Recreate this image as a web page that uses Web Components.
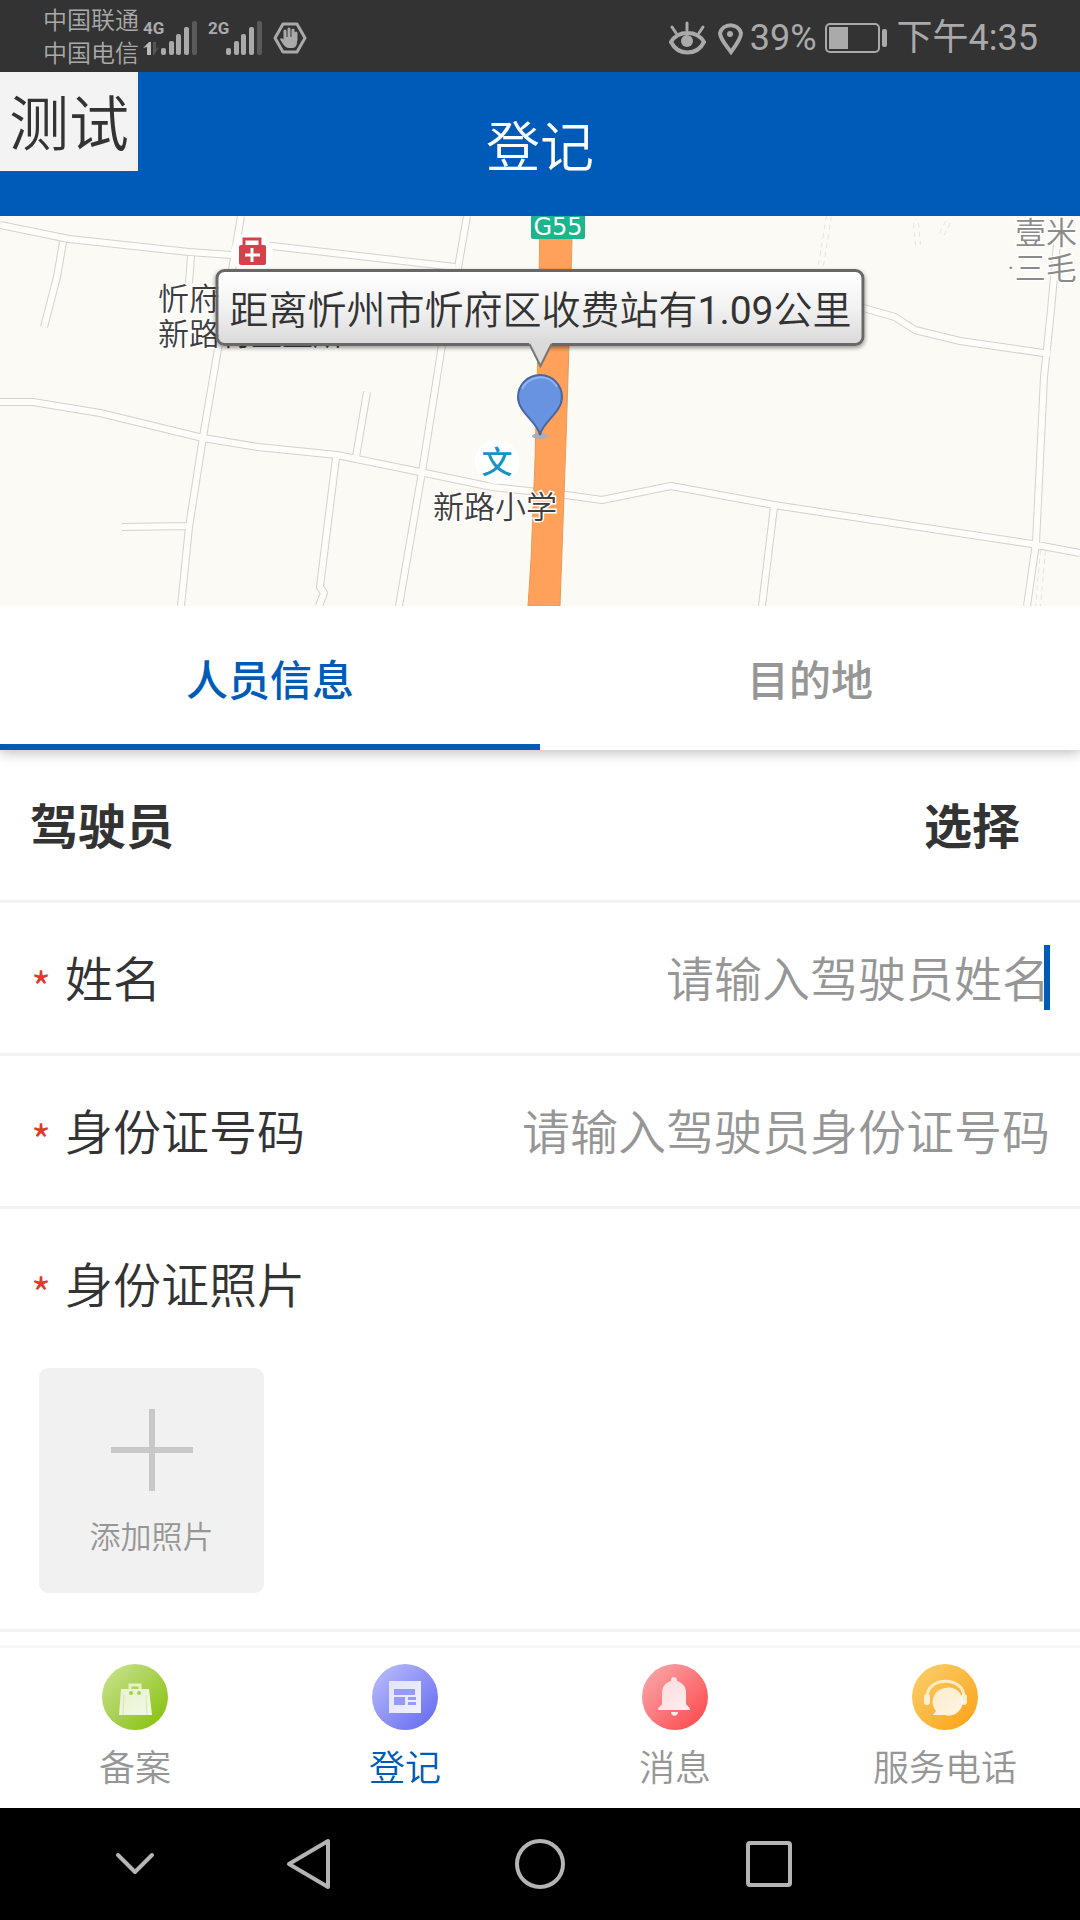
<!DOCTYPE html>
<html lang="zh-CN">
<head>
<meta charset="utf-8">
<meta name="viewport" content="width=device-width, initial-scale=1">
<title>登记</title>
<style>
  body {
    margin: 0;
    min-height: 100vh;
    display: flex;
    flex-direction: column;
    background: #fff;
    color: #333;
    font-family: "Noto Sans CJK SC", sans-serif;
    font-weight: 350;
    --brand: #005bb8;
    --muted: #969696;
    --line: #f3f3f3;
  }
  main {
    flex: 1;
  }
</style>
</head>
<body>
<status-bar></status-bar>
<app-header badge="测试">登记</app-header>
<map-view>距离忻州市忻府区收费站有<b>1.09</b>公里</map-view>
<tab-strip>
  <tab-button selected>人员信息</tab-button>
  <tab-button>目的地</tab-button>
</tab-strip>
<main>
  <section-title action="选择">驾驶员</section-title>
  <text-field label="姓名" placeholder="请输入驾驶员姓名" active></text-field>
  <text-field label="身份证号码" placeholder="请输入驾驶员身份证号码"></text-field>
  <photo-field label="身份证照片">添加照片</photo-field>
</main>
<bottom-nav>
  <nav-item icon="bag">备案</nav-item>
  <nav-item icon="form" current>登记</nav-item>
  <nav-item icon="bell">消息</nav-item>
  <nav-item icon="headset">服务电话</nav-item>
</bottom-nav>
<system-nav></system-nav>

<script>
class BaseElement extends HTMLElement {
  constructor() {
    super();
    this.attachShadow({ mode: 'open' });
  }

  connectedCallback() {
    this.shadowRoot.innerHTML = this.render();
  }
}

class StatusBar extends BaseElement {
  signal() {
    return `
      <g fill="#aaa">
        <rect x="18" y="28" width="5" height="7" rx="2"/>
        <rect x="26" y="21" width="5" height="14" rx="2"/>
        <rect x="33" y="14" width="5" height="21" rx="2"/>
        <rect x="41" y="7" width="5" height="28" rx="2"/>
      </g>
      <rect x="49" y="1" width="5" height="34" rx="2" fill="#5a5a5a"/>
    `;
  }

  render() {
    return `
      <style>
      :host {
        display: flex;
        align-items: center;
        box-sizing: border-box;
        min-height: 72px;
        padding: 3px 42px 0 43px;
        background: #333;
        color: #aaa;
        font-family: Roboto, "Noto Sans CJK SC", sans-serif;
        font-size: 36px;
        font-weight: 400;
        line-height: 48px;
      }
      svg {
        display: block;
        flex: none;
      }
      .carriers {
        margin-right: 4px;
        font-size: 24px;
        font-weight: 350;
        line-height: 33px;
      }
      .signal {
        display: grid;
        margin-right: 9px;
      }
      .signal > * {
        grid-area: 1 / 1;
      }
      .type {
        font-size: 17px;
        font-weight: 700;
        line-height: 17px;
      }
      .hand {
        margin-right: auto;
      }
      .eye {
        margin-right: 11px;
      }
      .pin {
        margin-right: 6px;
      }
      .battery {
        margin: 0 10px 0 8px;
      }
      </style>
      <div class="carriers"><div>中国联通</div><div>中国电信</div></div>
      <div class="signal">
        <span class="type">4G</span>
        <svg width="56" height="36" viewBox="0 0 56 36">
          <path d="M0 28l6-6h2v13H4v-8z" fill="#bbb"/>
          <path d="M10 22h3v7l3-2-5 8h-1z" fill="#555"/>
          ${this.signal()}
        </svg>
      </div>
      <div class="signal">
        <span class="type">2G</span>
        <svg width="56" height="36" viewBox="0 0 56 36">${this.signal()}</svg>
      </div>
      <svg class="hand" width="34" height="32" viewBox="0 0 34 32">
        <path d="M10 2h14l8 14-8 14H10L2 16z" fill="none" stroke="#aaa" stroke-width="3" stroke-linejoin="round"/>
        <path d="M12 18V9m4 8V7m4 10V8m3 10v-7" stroke="#aaa" stroke-width="3" stroke-linecap="round"/>
        <path d="M11 15h13v5c0 4-2 6-5 6h-3c-4 0-7-5-9-9 2-2 4 1 5 3z" fill="#aaa"/>
      </svg>
      <svg class="eye" width="37" height="34" viewBox="0 0 37 34">
        <path d="M2 21C9 9 28 9 35 21 28 35 9 35 2 21z" fill="none" stroke="#aaa" stroke-width="4"/>
        <circle cx="18" cy="20" r="6" fill="#aaa"/>
        <path d="M18 9V2M7 12L3 6m27 6l4-6" stroke="#aaa" stroke-width="3" stroke-linecap="round"/>
      </svg>
      <svg class="pin" width="27" height="35" viewBox="0 0 27 35">
        <path d="M14 32C9 25 3 19 3 13a11 11 0 0 1 21 0c0 6-5 12-10 19z" fill="none" stroke="#aaa" stroke-width="4"/>
        <circle cx="13" cy="14" r="3" fill="#aaa"/>
      </svg>
      <span>39%</span>
      <svg class="battery" width="62" height="30" viewBox="0 0 62 30">
        <rect x="1" y="1" width="53" height="28" rx="4" fill="none" stroke="#aaa" stroke-width="2"/>
        <rect x="4" y="4" width="19" height="22" fill="#aaa"/>
        <rect x="57" y="6" width="5" height="18" rx="2" fill="#aaa"/>
      </svg>
      <span>下午4:35</span>
    `;
  }
}

class AppHeader extends BaseElement {
  render() {
    return `
      <style>
      :host {
        display: block;
        position: relative;
        padding: 36px 0;
        background: var(--brand);
        color: #fff;
        text-align: center;
      }
      h1 {
        margin: 0;
        font-size: 54px;
        font-weight: inherit;
        line-height: 72px;
      }
      .badge {
        position: absolute;
        top: 0;
        left: 0;
        padding: 6px 9px 9px;
        background: #f3f3f3;
        color: #333;
        font-size: 60px;
        line-height: 84px;
      }
      </style>
      <h1><slot></slot></h1>
      <div class="badge">${this.getAttribute('badge')}</div>
    `;
  }
}

class MapView extends BaseElement {
  render() {
    const roads = [
      'M0 225L69 239L189 252L232 255',
      'M252 243L272 246L455 267',
      'M63 242L57 277L44 327',
      'M191 256L189 283',
      'M241 216L232 270L219 343L203 437L189 527L181 606',
      'M0 402H33L100 413L203 438L258 447L337 455L420 472L492 487L566 495L602 500L671 486L774 505L1032 544L1080 553',
      'M367 392L356 457',
      'M336 458L327 530L320 587L324 593L319 606',
      'M467 216L458 268L442 345L422 472L399 606',
      'M122 527L188 526',
      'M860 307L895 317L915 330L960 341L1050 354',
      'M1057 243L1051 310L1044 377L1036 543L1027 606',
      'M774 507L762 606',
    ].join('');

    return `
      <style>
      :host {
        display: block;
        position: relative;
        height: 390px;
        overflow: hidden;
        background: #fcfaf4;
        font-family: Roboto, "Noto Sans CJK SC", sans-serif;
      }
      svg {
        display: block;
        width: 100%;
        height: 100%;
      }
      .label {
        font-size: 31px;
        fill: #3e3e3e;
        stroke: #fff;
        stroke-width: 3px;
        paint-order: stroke;
      }
      .faint {
        fill: #8a8a8a;
      }
      .callout {
        position: absolute;
        top: 53px;
        left: 50%;
        transform: translateX(-50%);
        padding: 14px 10px 6px 11px;
        border: 3px solid #686868;
        border-radius: 9px;
        background: linear-gradient(#fff, #f2f2f2 50%, #dadada);
        box-shadow: 0 2px 4px rgba(0, 0, 0, 0.4);
        color: #333;
        font-size: 39px;
        line-height: 51px;
        white-space: nowrap;
      }
      ::slotted(b) {
        font-weight: 400;
      }
      .tail {
        position: absolute;
        top: 100%;
        left: 50%;
        width: 24px;
        height: 26px;
        transform: translateX(-50%);
        overflow: visible;
      }
      </style>
      <svg viewBox="0 216 1080 390" preserveAspectRatio="xMidYMid slice">
        <g fill="none" stroke-linejoin="round">
          <path d="M829 216L821 265M916 223L918 245M948 222L942 234M1043 550L1038 606" stroke="#e6e4df" stroke-width="6" stroke-dasharray="5 4"/>
          <path d="M829 216L821 265M916 223L918 245M948 222L942 234M1043 550L1038 606" stroke="#fcfaf4" stroke-width="4"/>
          <path d="${roads}" stroke="#d4d2ce" stroke-width="8"/>
          <path d="${roads}" stroke="#fefdfa" stroke-width="6"/>
        </g>
        <path d="M540 216H572V240L569 345L566 440L560 606H528L531 560L535 460L538 345L540 216z" fill="#ffa15a" stroke="#e79a58"/>
        <rect x="531" y="210" width="54" height="29" rx="2" fill="#1bb68e"/>
        <text x="558" y="235" text-anchor="middle" font-family="DejaVu Sans, sans-serif" font-size="24" font-weight="400" fill="#fff">G55</text>
        <circle cx="252" cy="253" r="21" fill="#fff"/>
        <path d="M244 246v-7h16v7" fill="none" stroke="#d3414a" stroke-width="3"/>
        <rect x="239" y="245" width="27" height="20" rx="2" fill="#d3414a"/>
        <path d="M252 248v14m-7-7h15" stroke="#fff" stroke-width="3"/>
        <text class="label" x="158" y="310">忻府</text>
        <text class="label" x="158" y="345">新路村卫生所</text>
        <text class="label faint" x="1015" y="244">壹米</text>
        <text class="label faint" x="1007" y="279">·三毛</text>
        <circle cx="497" cy="462" r="22" fill="#fff"/>
        <text x="497" y="473" text-anchor="middle" font-size="31" font-weight="500" fill="#1793c4">文</text>
        <text class="label" x="433" y="518">新路小学</text>
        <ellipse cx="540" cy="436" rx="8" ry="3" fill="#a8aebb"/>
        <path d="M540 435c-2-13-22-22-22-38a22 22 0 0 1 44 0c0 16-20 25-22 38z" fill="#6893e0" stroke="#48669f" stroke-width="2"/>
        <path d="M522 389c5-13 27-17 35-2" fill="none" stroke="#8fb4f3" stroke-width="2"/>
      </svg>
      <div class="callout">
        <slot></slot>
        <svg class="tail" viewBox="0 0 24 26">
          <path d="M0-1L12 23L24-1z" fill="#dadada"/>
          <path d="M1 1L12 23L23 1" fill="none" stroke="#777" stroke-width="2"/>
        </svg>
      </div>
    `;
  }
}

class TabStrip extends BaseElement {
  render() {
    return `
      <style>
      :host {
        display: flex;
        position: relative;
        background: #fff;
        box-shadow: 0 3px 12px rgba(0, 0, 0, 0.25);
        clip-path: inset(0 0 -24px);
      }
      </style>
      <slot></slot>
    `;
  }
}

class TabButton extends BaseElement {
  render() {
    return `
      <style>
      :host {
        display: flex;
        flex: 1;
      }
      button {
        flex: 1;
        padding: 42px 0;
        border: 0;
        background: none;
        color: var(--muted);
        font: 500 42px/60px "Noto Sans CJK SC", sans-serif;
      }
      :host([selected]) button {
        color: var(--brand);
        box-shadow: inset 0 -6px var(--brand);
      }
      </style>
      <button type="button"><slot></slot></button>
    `;
  }
}

class SectionTitle extends BaseElement {
  render() {
    return `
      <style>
      :host {
        display: flex;
        justify-content: space-between;
        padding: 40px 60px 44px 30px;
        border-bottom: 3px solid var(--line);
      }
      h2, button {
        margin: 0;
        padding: 0;
        border: 0;
        background: none;
        color: inherit;
        font: 700 48px/66px "Noto Sans CJK SC", sans-serif;
      }
      </style>
      <h2><slot></slot></h2>
      <button type="button">${this.getAttribute('action')}</button>
    `;
  }
}

const fieldLabelStyle = `
  label, .label {
    display: flex;
    align-items: center;
    flex: none;
    font-size: 48px;
    line-height: 66px;
  }
  .required {
    width: 22px;
    margin-right: 13px;
    padding-top: 20px;
    color: #e2382c;
    font-size: 42px;
    font-weight: 400;
    line-height: 36px;
    text-align: center;
  }
`;

class TextField extends BaseElement {
  render() {
    return `
      <style>
      :host {
        display: flex;
        align-items: center;
        padding: 40px 30px 44px;
        border-bottom: 3px solid var(--line);
      }
      ${fieldLabelStyle}
      .control {
        flex: 1;
        position: relative;
        min-width: 0;
      }
      input {
        display: block;
        box-sizing: border-box;
        width: 100%;
        height: 66px;
        padding: 0;
        border: 0;
        outline: 0;
        background: none;
        color: inherit;
        font: inherit;
        font-size: 48px;
        line-height: 66px;
        text-align: right;
      }
      input::placeholder {
        color: var(--muted);
        opacity: 1;
      }
      .caret {
        display: none;
        position: absolute;
        inset: 2px 0 -1px auto;
        width: 6px;
        background: var(--brand);
      }
      :host([active]) .caret {
        display: block;
      }
      </style>
      <label for="input"><span class="required">*</span>${this.getAttribute('label')}</label>
      <div class="control">
        <input id="input" type="text" placeholder="${this.getAttribute('placeholder')}">
        <span class="caret"></span>
      </div>
    `;
  }
}

class PhotoField extends BaseElement {
  render() {
    return `
      <style>
      :host {
        display: block;
        padding: 40px 30px 36px;
        border-bottom: 3px solid var(--line);
      }
      ${fieldLabelStyle}
      button {
        display: flex;
        flex-direction: column;
        align-items: center;
        justify-content: center;
        gap: 20px;
        width: 225px;
        height: 225px;
        margin: 53px 9px 0;
        padding: 6px 0 0;
        border: 0;
        border-radius: 9px;
        background: #f1f1f1;
        color: var(--muted);
        font: inherit;
        font-size: 31px;
        line-height: 48px;
      }
      </style>
      <div class="label" id="label"><span class="required">*</span>${this.getAttribute('label')}</div>
      <button type="button" aria-describedby="label">
        <svg width="82" height="82" viewBox="0 0 82 82">
          <path d="M41 0v82M0 41h82" stroke="#c8c8c8" stroke-width="6"/>
        </svg>
        <slot></slot>
      </button>
    `;
  }
}

class BottomNav extends BaseElement {
  render() {
    return `
      <style>
      :host {
        display: flex;
        border-top: 3px solid #f7f7f7;
        background: #fff;
      }
      </style>
      <slot></slot>
    `;
  }
}

const navIcons = {
  bag: {
    colors: ['#c5e089', '#8ac211'],
    shape: `
      <path d="M19 25h28l3 26H17z" fill="url(#shine)"/>
      <path d="M28 25v-4h10v4" fill="none" stroke="#e4f2c6" stroke-width="3"/>
      <circle cx="29" cy="29" r="2" fill="#a5cf4c"/>
      <circle cx="37" cy="29" r="2" fill="#a5cf4c"/>
      <path d="M22 31l-1 20m23-20l1 20" stroke="#d4e9a6"/>
    `,
  },
  form: {
    colors: ['#b5b7fa', '#6870f2'],
    shape: `
      <rect x="17" y="17" width="32" height="32" fill="url(#shine)"/>
      <path d="M22 25h21v6H22zM22 33h11v8H22zM36 33h8v3h-8zM36 38h8v3h-8z" fill="#959af6"/>
    `,
  },
  bell: {
    colors: ['#f9a3a5', '#fd4d51'],
    shape: `
      <path d="M32 13c2 0 3 1 3 4 6 2 9 6 9 12v11c1 2 4 3 4 6H16c0-3 3-4 4-6V29c0-6 3-10 9-12 0-3 1-4 3-4z" fill="url(#shine)"/>
      <path d="M29 48h7c0 5-7 5-7 0z" fill="#fff0f0"/>
    `,
  },
  headset: {
    colors: ['#f9cc66', '#fda51b'],
    shape: `
      <path d="M15 33C15 12 52 12 52 33" fill="none" stroke="#fdebc5" stroke-width="3"/>
      <rect x="12" y="30" width="6" height="11" rx="3" fill="#fdf0d5"/>
      <rect x="49" y="30" width="6" height="11" rx="3" fill="#fdf0d5"/>
      <path d="M33 24a14 14 0 1 1 0 27H21l3-4A14 14 0 0 1 33 24z" fill="url(#shine)"/>
    `,
  },
};

class NavItem extends BaseElement {
  render() {
    const { colors, shape } = navIcons[this.getAttribute('icon')];

    return `
      <style>
      :host {
        display: block;
        flex: 1;
      }
      a {
        display: flex;
        flex-direction: column;
        align-items: center;
        gap: 11px;
        padding: 16px 0 19px;
        color: var(--muted);
        font-size: 36px;
        line-height: 48px;
        text-decoration: none;
      }
      :host([current]) a {
        color: var(--brand);
      }
      </style>
      <a href="#${this.getAttribute('icon')}">
        <svg width="66" height="66" viewBox="0 0 66 66">
          <defs>
            <linearGradient id="disc" x1="0" y1="0" x2="1" y2="1">
              <stop offset="0.1" stop-color="${colors[0]}"/>
              <stop offset="0.9" stop-color="${colors[1]}"/>
            </linearGradient>
            <linearGradient id="shine" x1="0" y1="0" x2="1" y2="1">
              <stop offset="0" stop-color="#fff" stop-opacity="0.7"/>
              <stop offset="1" stop-color="#fff" stop-opacity="0.9"/>
            </linearGradient>
          </defs>
          <circle cx="33" cy="33" r="33" fill="url(#disc)"/>
          ${shape}
        </svg>
        <slot></slot>
      </a>
    `;
  }
}

class SystemNav extends BaseElement {
  render() {
    return `
      <style>
      :host {
        display: grid;
        grid-template-columns: 75fr 120fr 230fr 230fr 230fr 195fr;
        background: #000;
      }
      button {
        display: grid;
        place-items: center;
        padding: 28px 0;
        border: 0;
        background: none;
      }
      button:first-of-type {
        grid-column: 2;
      }
      svg {
        fill: none;
        stroke: #b4b4b4;
        stroke-width: 4px;
        stroke-linecap: round;
        stroke-linejoin: round;
      }
      </style>
      <button type="button" aria-label="收起"><svg width="56" height="56" viewBox="0 0 56 56"><path d="M11 19l17 17 17-17"/></svg></button>
      <button type="button" aria-label="返回"><svg width="56" height="56" viewBox="0 0 56 56"><path d="M46 5v46L7 28z"/></svg></button>
      <button type="button" aria-label="主页"><svg width="56" height="56" viewBox="0 0 56 56"><circle cx="28" cy="28" r="23"/></svg></button>
      <button type="button" aria-label="最近"><svg width="56" height="56" viewBox="0 0 56 56"><rect x="6" y="7" width="42" height="42" rx="2"/></svg></button>
    `;
  }
}

customElements.define('status-bar', StatusBar);
customElements.define('app-header', AppHeader);
customElements.define('map-view', MapView);
customElements.define('tab-strip', TabStrip);
customElements.define('tab-button', TabButton);
customElements.define('section-title', SectionTitle);
customElements.define('text-field', TextField);
customElements.define('photo-field', PhotoField);
customElements.define('bottom-nav', BottomNav);
customElements.define('nav-item', NavItem);
customElements.define('system-nav', SystemNav);
</script>
</body>
</html>
